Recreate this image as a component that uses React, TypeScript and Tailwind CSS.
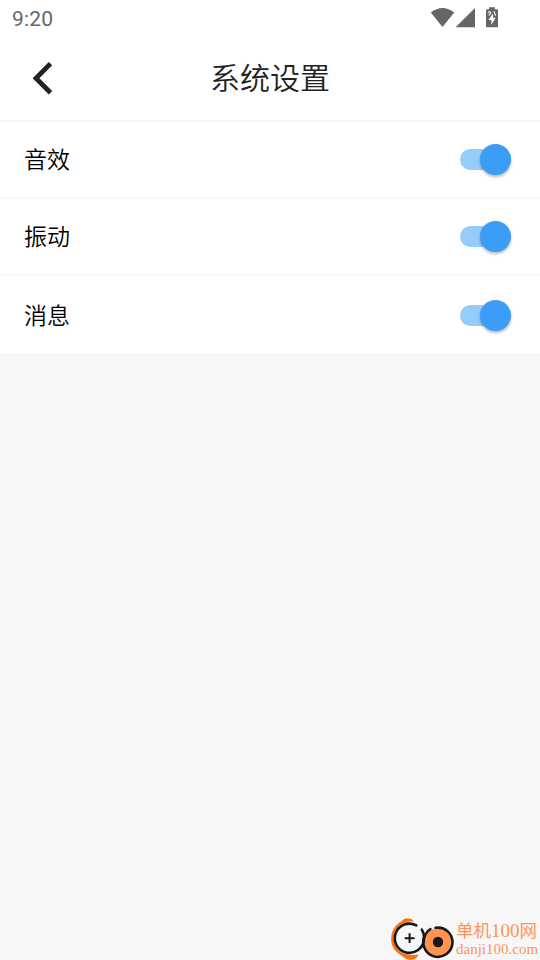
import React, { useState } from "react";

type SettingRowProps = {
  label: string;
  className: string;
};

const StatusBar: React.FC = () => (
  <div className="flex h-9 items-center justify-between pl-3 pr-[42px]">
    <span className="font-['Roboto',sans-serif] text-[21px] font-[450] leading-9 pt-0.5 tracking-[0.2px] text-[#666666]">9:20</span>
    <svg width="70" height="24" viewBox="0 0 70 24" fill="#666666" className="mt-0.5">
      {/* wifi */}
      <path d="M2.8 5.6Q14.5-3.4 26.2 5.6L14.5 20Z" />
      {/* signal */}
      <path d="M47 1V20.3H27.6Z" />
      {/* charging battery */}
      <path d="M61 0.3h5.8v2H69q1.2 0 1.2 1.2v15.6q0 1.2-1.2 1.2H59.2q-1.2 0-1.2-1.2V3.5q0-1.2 1.2-1.2H61Z" />
      <path d="M65 6.4L60.4 13h3v4.7l4.2-7h-2.6Z" fill="#fff" />
      <path d="M60 5.6q1.6-1.6 2.7-0.2q0 1-2 3M66 4l1.5 4.6" stroke="#fff" strokeWidth="1.1" fill="none" />
    </svg>
  </div>
);

const SettingRow: React.FC<SettingRowProps> = ({ label, className }) => {
  const [on, setOn] = useState(true);

  return (
    <li className={`flex items-center justify-between bg-white pl-6 pr-[29px] ${className}`}>
      <span className="pb-[3px] text-[23px] font-[350] leading-8 text-black">{label}</span>
      <button
        role="switch"
        aria-checked={on}
        aria-label={label}
        onClick={() => setOn(!on)}
        className="flex h-[31px] w-[51px] items-center"
      >
        <span
          className={`flex h-[21px] w-[51px] items-center rounded-full ${
            on ? "justify-end bg-[#96ccfb]" : "justify-start bg-[#bdbdbd]"
          }`}
        >
          <span
            className={`h-[31px] w-[31px] rounded-full shadow-[0_2px_3px_rgba(0,0,0,0.28)] ${
              on ? "bg-[#3b9df6]" : "bg-[#fafafa]"
            }`}
          />
        </span>
      </button>
    </li>
  );
};

const SiteMark: React.FC = () => (
  <div className="flex h-[43px] items-start justify-end pr-[3px]">
    <svg width="66" height="43" viewBox="0 0 66 43" fill="none">
      {/* outer swoosh */}
      <path d="M11.5 4.5C14 0.6 20.5 0 23.8 4.2C17 4.6 9.5 6.4 6 12.5C2.2 19.5 3.4 27.5 8.5 33C13 37.4 19 38.8 28.4 37.6C27 42.5 22 43.6 17.5 42.2C14.5 41.4 12 38.8 9 36.8C3 32.8 1 27.5 1.2 21C1.5 14 5 7.6 11.5 4.5Z" fill="#fd7013" />
      <circle cx="48" cy="25" r="13.8" fill="#ff934f" />
      <path d="M26.3 8.4A14.6 14.6 0 1 0 33.9 23Q34.6 17 31.8 12.6" stroke="#17171c" strokeWidth="2.6" strokeLinecap="round" />
      <path d="M45.5 10.8A14.6 14.6 0 1 1 35.3 17.8Q37.2 13.8 40.4 12.2" stroke="#17171c" strokeWidth="2.6" strokeLinecap="round" />
      <path d="M14.7 21.2h9.8M19.6 16.3v9.8" stroke="#17171c" strokeWidth="2" />
      <circle cx="48" cy="25" r="5.2" fill="#17171c" />
    </svg>
    <div className="flex w-[81px] flex-col whitespace-nowrap font-['Liberation_Serif','Noto_Sans_CJK_SC',serif] text-[#ff9459]">
      <span className="mt-[3px] flex items-center text-[17.5px] leading-[22px]">
        单机<span className="text-[19px]">100</span>网
      </span>
      <span className="-mt-px text-[15px] leading-4">danji100.com</span>
    </div>
  </div>
);

export default function App() {
  return (
    <div className="flex h-[960px] w-[540px] flex-col overflow-hidden bg-[#f7f7f7] font-['Noto_Sans_CJK_SC',sans-serif]">
      <header className="h-[120px] bg-white">
        <StatusBar />
        <div className="grid h-[84px] grid-cols-[80px_1fr_80px] items-center">
          <button aria-label="返回" className="pl-8">
            <svg width="22" height="34" viewBox="0 0 22 34" fill="none">
              <path d="M18.5 2.6L4 17.2L18.5 31.8" stroke="#222222" strokeWidth="4.8" />
            </svg>
          </button>
          <h1 className="pb-[5px] text-center text-[30px] leading-10 font-[350] text-[#222222]">系统设置</h1>
        </div>
      </header>
      <ul className="flex flex-col gap-0.5 pt-0.5">
        <SettingRow label="音效" className="h-[75px]" />
        <SettingRow label="振动" className="h-[75px]" />
        <SettingRow label="消息" className="h-[77px] pt-0.5" />
      </ul>
      <div className="mt-auto">
        <SiteMark />
      </div>
    </div>
  );
}
